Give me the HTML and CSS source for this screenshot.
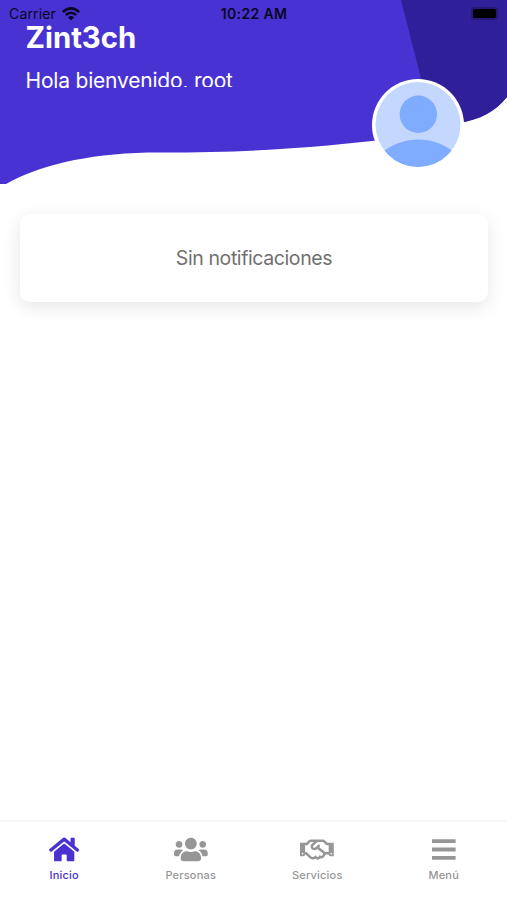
FILE: index.html
```html
<!DOCTYPE html>
<html lang="es">

<head>
  <meta charset="UTF-8">
  <meta name="viewport" content="width=device-width, initial-scale=1.0">
  <title>Zint3ch</title>
  <link rel="stylesheet" href="styles.css">
</head>

<body>
  <div class="app">
    <!-- Header -->
    <header class="header">
      <svg class="header-bg" viewBox="0 0 507 184" aria-hidden="true">
        <path fill="#4833d2" d="M0 0H507V97C493 114 474 121 452 124Q415 137 372 141C300 149 235 153 148 152.5C85 154 38 166 6 184H0Z" />
        <path fill="#2f1f98" d="M401 0H507V97C495 112 480 120 458 123L440 126L424 90Z" />
      </svg>

      <div class="status-bar">
        <div class="carrier">
          <span>Carrier</span>
          <svg width="18" height="14" viewBox="0 0 18 14" aria-hidden="true">
            <path fill="none" stroke="#0a0724" stroke-width="2.6" d="M.9 5.1Q9-2.2 17.1 5.1M3.8 8Q9 3.5 14.2 8" />
            <path fill="#0a0724" d="M9 13.4L5.9 10.2Q9 7.7 12.1 10.2Z" />
          </svg>
        </div>
        <span class="clock">10:22 AM</span>
        <span class="battery"></span>
      </div>

      <div class="welcome">
        <h1>Zint3ch</h1>
        <p>Hola bienve<span class="clipped">nido, root</span></p>
      </div>

      <svg class="avatar" viewBox="0 0 92 92" role="img" aria-label="root">
        <clipPath id="avatar-clip">
          <circle cx="46" cy="45.5" r="42.5" />
        </clipPath>
        <circle cx="46" cy="46" r="46" fill="#fff" />
        <g clip-path="url(#avatar-clip)">
          <rect width="92" height="92" fill="#c4d8ff" />
          <circle cx="46.3" cy="35.3" r="18.7" fill="#80acff" />
          <circle cx="46.3" cy="117" r="56.5" fill="#80acff" />
        </g>
      </svg>
    </header>

    <!-- Notifications -->
    <main class="content">
      <div class="card">Sin notificaciones</div>
    </main>

    <!-- Bottom tabs -->
    <nav class="tabs">
      <a class="tab active">
        <svg viewBox="0 0 576 512"><path d="M280.37 148.26L96 300.11V464a16 16 0 0 0 16 16l112.06-.29a16 16 0 0 0 15.92-16V368a16 16 0 0 1 16-16h64a16 16 0 0 1 16 16v95.64a16 16 0 0 0 16 16.05L464 480a16 16 0 0 0 16-16V300L295.67 148.26a12.19 12.19 0 0 0-15.3 0zM571.6 251.47L488 182.56V44.05a12 12 0 0 0-12-12h-56a12 12 0 0 0-12 12v72.61L318.47 43a48 48 0 0 0-61 0L4.34 251.47a12 12 0 0 0-1.6 16.9l25.5 31A12 12 0 0 0 45.15 301l235.22-193.74a12.19 12.19 0 0 1 15.3 0L530.9 301a12 12 0 0 0 16.9-1.6l25.5-31a12 12 0 0 0-1.7-16.93z" /></svg>
        <span>Inicio</span>
      </a>
      <a class="tab">
        <svg viewBox="0 0 640 512"><path d="M96 224c35.3 0 64-28.7 64-64s-28.7-64-64-64-64 28.7-64 64 28.7 64 64 64zm448 0c35.3 0 64-28.7 64-64s-28.7-64-64-64-64 28.7-64 64 28.7 64 64 64zm32 32h-64c-17.6 0-33.5 7.1-45.1 18.6 40.3 22.1 68.9 62 75.1 109.4h66c17.7 0 32-14.3 32-32v-32c0-35.3-28.7-64-64-64zm-256 0c61.9 0 112-50.1 112-112S381.9 32 320 32 208 82.1 208 144s50.1 112 112 112zm76.8 32h-8.3c-20.8 10-43.9 16-68.5 16s-47.6-6-68.5-16h-8.3C179.6 288 128 339.6 128 403.2V432c0 26.5 21.5 48 48 48h288c26.5 0 48-21.5 48-48v-28.8c0-63.6-51.6-115.2-115.2-115.2zm-223.7-13.4C161.5 263.1 145.6 256 128 256H64c-35.3 0-64 28.7-64 64v32c0 17.7 14.3 32 32 32h65.9c6.3-47.4 34.9-87.3 75.2-109.4z" /></svg>
        <span>Personas</span>
      </a>
      <a class="tab">
        <svg viewBox="0 0 640 512"><path d="M519.2 127.9l-47.6-47.6A56.252 56.252 0 0 0 432 64H205.2c-14.8 0-29.1 5.9-39.6 16.3L118 127.9H0v255.7h64c17.6 0 31.8-14.2 31.9-31.7h9.1l84.6 76.4c30.9 25.1 73.8 25.7 105.6 3.8 12.5 10.8 26 15.9 41.1 15.9 18.2 0 35.3-7.4 48.8-24 22.1 8.7 48.2 2.6 64-16.8l26.2-32.3c5.6-6.9 9.1-14.8 10.9-23h57.9c.1 17.5 14.4 31.7 31.9 31.7h64V127.9H519.2zM48 351.6c-8.8 0-16-7.2-16-16s7.2-16 16-16 16 7.2 16 16c0 8.9-7.2 16-16 16zm390-6.9l-26.1 32.2c-2.8 3.4-7.8 4-11.3 1.2l-23.9-19.4-30 36.5c-6 7.3-15 4.8-18 2.4l-36.8-31.5-15.6 19.2c-13.9 17.1-39.2 19.7-55.3 6.6l-97.3-88H96V175.8h41.9l61.7-61.6c2-.8 3.7-1.5 5.7-2.3H262l-38.7 35.5c-29.4 26.9-31.1 72.3-4.4 101.3 14.8 16.2 61.2 41.2 101.5 4.4l8.2-7.5 108.2 87.8c3.4 2.8 3.9 7.9 1.2 11.3zm106-40.8h-69.2c-2.3-2.8-4.9-5.4-7.7-7.7l-102.7-83.4 12.5-11.4c6.5-6 7-16.1 1-22.6L367 167.1c-6-6.5-16.1-6.9-22.6-1l-55.2 50.6c-9.5 8.7-25.7 9.4-34.6 0-9.3-9.9-8.5-25.1 1.2-33.9l65.6-60.1c7.4-6.8 17-10.5 27-10.5l83.7-.2c2.1 0 4.1.8 5.5 2.3l61.7 61.6H544v128zm48 47.7c-8.8 0-16-7.2-16-16s7.2-16 16-16 16 7.2 16 16c0 8.9-7.2 16-16 16z" /></svg>
        <span>Servicios</span>
      </a>
      <a class="tab">
        <svg viewBox="0 0 448 512"><path d="M0 60h448v72H0zM0 220h448v72H0zM0 380h448v72H0z" /></svg>
        <span>Menú</span>
      </a>
    </nav>
  </div>
</body>

</html>
```

FILE: styles.css
```css
body {
  margin: 0;
  font-family: Inter, sans-serif;
  background: #fff;
}

.app {
  display: flex;
  flex-direction: column;
  height: 100vh;
  overflow: hidden;
}

.header {
  position: relative;
  height: 184px;
}

.header-bg {
  position: absolute;
  top: 0;
  left: 0;
  width: 100%;
  height: 184px;
}

.status-bar {
  position: relative;
  display: grid;
  grid-template-columns: 1fr auto 1fr;
  align-items: center;
  height: 28px;
  padding: 0 11px 0 9px;
  font-size: 14px;
  line-height: 28px;
  color: #0a0724;
}

.carrier {
  display: flex;
  align-items: center;
  gap: 6px;
  letter-spacing: 0.15px;
}

.clock {
  font-weight: 600;
  letter-spacing: 0.35px;
  padding-left: 3px;
}

.battery {
  justify-self: end;
  width: 23px;
  height: 9px;
  margin-top: -1px;
  border-radius: 2px;
  background: #000;
  box-shadow: 0 0 0 2px #251879;
}

.welcome {
  position: relative;
  padding-left: 25.5px;
  margin-top: -8px;
  color: #fff;
}

.welcome h1 {
  margin: 0;
  font-size: 29.3px;
  line-height: 36px;
  font-weight: 700;
}

.welcome p {
  margin: 11px 0 0;
  font-size: 21px;
  line-height: 28px;
  letter-spacing: -0.2px;
}

.clipped {
  display: inline-block;
  clip-path: inset(0 0 8px 0);
}

.avatar {
  position: absolute;
  top: 79px;
  left: 372px;
  width: 92px;
  height: 92px;
}

.content {
  flex: 1;
  padding: 30px 19px 0 20px;
}

.card {
  height: 88px;
  border-radius: 10px;
  background: #fff;
  box-shadow: 0 5px 18px rgba(0, 0, 0, 0.1);
  font-size: 19.5px;
  line-height: 89px;
  letter-spacing: -0.4px;
  text-align: center;
  color: #707070;
}

.tabs {
  display: flex;
  box-sizing: border-box;
  height: 80px;
  padding: 14px 0 0 1px;
  border-top: 2px solid #f6f6f6;
}

.tab {
  flex: 1;
  display: flex;
  flex-direction: column;
  align-items: center;
  gap: 4px;
  font-size: 11px;
  line-height: 16px;
  font-weight: 500;
  letter-spacing: 0.2px;
  color: #969696;
}

.tab svg {
  height: 27px;
  fill: currentColor;
}

.tab.active {
  color: #4833d2;
}
```
